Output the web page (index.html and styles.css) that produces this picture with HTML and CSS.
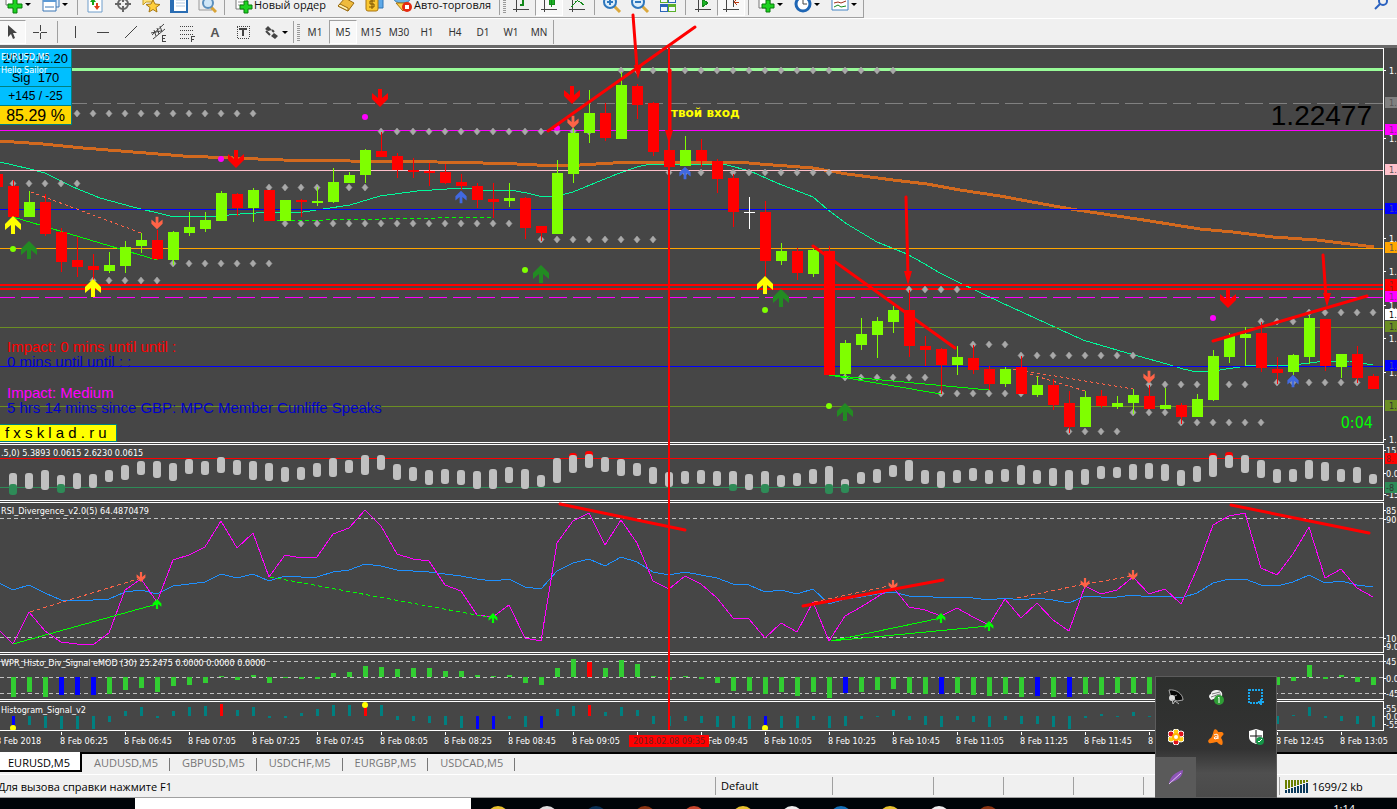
FILE: index.html
```html
<!DOCTYPE html>
<html lang="ru">
<head>
    <meta charset="UTF-8">
    <meta name="viewport" content="width=device-width, initial-scale=1.0">
    <title>EURUSD,M5</title>
    <link rel="stylesheet" href="styles.css">
</head>
<body>
    <div class="terminal">
        <div class="toolbar toolbar-main">
            <div class="group">
            <button class="tool tool-menu" aria-label="New chart">
                <svg class="icon" viewBox="0 0 20 20"><path d="M2 2h9v9H2z" fill="#fff" stroke="#777"/><path d="M9 5h4v5h5v4h-5v5H9v-5H4v-4h5z" fill="#1ed321" stroke="#087a0c"/></svg>
                <span class="caret"></span>
            </button>
            <button class="tool tool-menu" aria-label="Profiles">
                <svg class="icon" viewBox="0 0 20 20"><path d="M5 2h13v11H5z" fill="#e3eefa" stroke="#3b77b5"/><path d="M2 6h13v11H2z" fill="#fff" stroke="#3b77b5"/><path d="M2 7h13" stroke="#5c9ad6" stroke-width="2"/><path d="M4 13h9" stroke="#3b77b5"/></svg>
                <span class="caret"></span>
            </button>
            <span class="sep"></span>
            <button class="tool" aria-label="Market watch"><svg class="icon" viewBox="0 0 20 20"><path d="M3 1h14v17H3z" fill="#fff" stroke="#6f9dcb"/><path d="M8 4l3 4H9v3H7V8H5z" fill="#16a51c"/><path d="M12 16l-3-4h2V9h2v3h2z" fill="#e0401b"/></svg></button>
            <button class="tool" aria-label="Navigator"><svg class="icon" viewBox="0 0 20 20" fill="none" stroke="#666" stroke-width="2"><circle cx="10" cy="10" r="5"/><path d="M10 2v6M10 12v6M2 10h6M12 10h6"/></svg></button>
            <button class="tool" aria-label="Favorites"><svg class="icon" viewBox="0 0 20 20"><path d="M2 2h10v6H5l-3 3z" fill="#fde17a" stroke="#c89f23"/><path d="M12 6l2 4 5 .5-4 3 1 4.500-4-2.500-4 2.500 1-4.500-4-3 5-.5z" fill="#ffcf3c" stroke="#a87913"/></svg></button>
            <button class="tool" aria-label="Data window"><svg class="icon" viewBox="0 0 20 20"><path d="M2 1h16v17H2z" fill="#fff" stroke="#2a6db3" stroke-width="2"/><path d="M4 2v15" stroke="#2a6db3" stroke-width="2"/><path d="M7 6h9M7 9h9M7 12h9" stroke="#b5cbe2"/></svg></button>
            <button class="tool" aria-label="Strategy tester"><svg class="icon" viewBox="0 0 20 20"><path d="M2 1h13v15H2z" fill="#eee" stroke="#999"/><path d="M14 13l5 5" stroke="#d9a437" stroke-width="3"/><circle cx="11" cy="9" r="5" fill="#cfe6f7" stroke="#5b8fbd" stroke-width="2"/></svg></button>
            <span class="sep"></span>
            <button class="tool tool-text">
                <svg class="icon" viewBox="0 0 20 20"><path d="M3 1h11v14H3z" fill="#fff" stroke="#777"/><path d="M5 5h7M5 8h7M5 11h5" stroke="#999"/><path d="M11 7h4v4h4v4h-4v4h-4v-4H7v-4h4z" fill="#1ed321" stroke="#087a0c"/></svg>
                Новый ордер
            </button>
            <button class="tool" aria-label="MetaEditor"><svg class="icon" viewBox="0 0 20 20"><path d="M2 12l7-8 9 5-6 8z" fill="#efbb3d" stroke="#9a6a0e"/><path d="M2 12l10 5v-3L4 10z" fill="#fff2b3" stroke="#9a6a0e"/></svg></button>
            <button class="tool" aria-label="Market"><svg class="icon" viewBox="0 0 20 20"><path d="M9 2h10v12H9z" fill="#5ea9e8" stroke="#2f75b5"/><rect x="2" y="4" width="12" height="13" rx="2" fill="#fbc832" stroke="#a87511"/><path d="M11 7H6v3h4v3H5M8 5v10" fill="none" stroke="#7a5200"/></svg></button>
            <button class="tool tool-text">
                <svg class="icon" viewBox="0 0 20 20"><ellipse cx="9" cy="5" rx="8" ry="4" fill="#70b4e5" stroke="#347cae"/><path d="M3 9h11l-4 8z" fill="#fbcf48" stroke="#a87511"/><circle cx="14" cy="13" r="5" fill="#e52b12"/><path d="M12 11h4v4h-4z" fill="#fff"/></svg>
                Авто-торговля
            </button>
            <span class="grip"></span>
            <button class="tool" aria-label="Bar chart"><svg class="icon line" viewBox="0 0 20 20"><path d="M5 2v16M2 15h16"/><path d="M12 4v8M12 5h3M9 11h3" stroke="#14891b" stroke-width="2"/></svg></button>
            <button class="tool active" aria-label="Candlesticks"><svg class="icon line" viewBox="0 0 20 20"><path d="M5 2v16M2 15h16"/><path d="M10 4h5v6h-5zM12 2v11" fill="#1bb325" stroke="#14891b"/></svg></button>
            <button class="tool" aria-label="Line chart"><svg class="icon line" viewBox="0 0 20 20"><path d="M5 2v16M2 15h16"/><path d="M4 13c3-1 4-7 7-6 3 0 3 3 6 4" stroke="#14891b"/></svg></button>
            <span class="sep"></span>
            <button class="tool" aria-label="Zoom in"><svg class="icon" viewBox="0 0 20 20"><path d="M12 12l6 6" stroke="#dba83d" stroke-width="3"/><circle cx="8" cy="8" r="6" fill="#dceefb" stroke="#2e77bd" stroke-width="2"/><path d="M5 8h6M8 5v6" stroke="#2e77bd" stroke-width="2"/></svg></button>
            <button class="tool" aria-label="Zoom out"><svg class="icon" viewBox="0 0 20 20"><path d="M12 12l6 6" stroke="#dba83d" stroke-width="3"/><circle cx="8" cy="8" r="6" fill="#dceefb" stroke="#2e77bd" stroke-width="2"/><path d="M5 8h6" stroke="#2e77bd" stroke-width="2"/></svg></button>
            <button class="tool" aria-label="Tile windows"><svg class="icon" viewBox="0 0 20 20"><path d="M2 1h8v8H2zM10 10h8v8h-8z" fill="#5bb02a"/><path d="M10 1h8v8h-8zM2 10h8v8H2z" fill="#2c66b8"/><path d="M3 4h6v4H3zM11 4h6v4h-6zM3 13h6v4H3zM11 13h6v4h-6z" fill="#f3f7ff"/></svg></button>
            <span class="sep"></span>
            <button class="tool" aria-label="Auto scroll"><svg class="icon line" viewBox="0 0 20 20"><path d="M5 2v16M2 15h16"/><path d="M9 5l6 4-6 4z" fill="#1bb325" stroke="#14891b"/></svg></button>
            <button class="tool active" aria-label="Chart shift"><svg class="icon line" viewBox="0 0 20 20"><path d="M5 2v16M2 15h16M12 2v11"/><path d="M18 8h-5M16 5l-3 3 3 3" stroke="#b93a12"/></svg></button>
            <span class="sep"></span>
            <button class="tool tool-menu" aria-label="Indicators">
                <svg class="icon" viewBox="0 0 20 20"><path d="M3 1h11v13H3z" fill="#fff" stroke="#777"/><path d="M10 6h4v4h4v4h-4v4h-4v-4H6v-4h4z" fill="#1ed321" stroke="#087a0c"/></svg>
                <span class="caret"></span>
            </button>
            <button class="tool tool-menu" aria-label="Periods">
                <svg class="icon" viewBox="0 0 20 20"><circle cx="10" cy="10" r="7" fill="#fff" stroke="#1f66b4" stroke-width="3"/><path d="M10 5v5h4" fill="none" stroke="#444"/></svg>
                <span class="caret"></span>
            </button>
            <button class="tool tool-menu" aria-label="Templates">
                <svg class="icon" viewBox="0 0 20 20"><path d="M2 3h16v13H2z" fill="#fff" stroke="#4384c4"/><path d="M2 4h16" stroke="#4384c4" stroke-width="2"/><path d="M4 9l4-1 3 1 5-2" fill="none" stroke="#a02f1a"/><path d="M4 13l4-2 3 2 5-1" fill="none" stroke="#14891b"/></svg>
                <span class="caret"></span>
            </button>
            </div>
            <button class="tool search" aria-label="Search"><svg class="icon" viewBox="0 0 20 20" fill="none" stroke="#2b62c0" stroke-width="2"><circle cx="12" cy="8" r="4"/><path d="M9 11l-5 5"/></svg></button>
        </div>

        <div class="toolbar toolbar-draw">
            <div class="group">
            <button class="tool active" aria-label="Cursor"><svg class="icon" viewBox="0 0 20 20"><path d="M6 3v12l3-3 2 5 2-1-2-5h4z" fill="#444"/></svg></button>
            <button class="tool" aria-label="Crosshair"><svg class="icon line" viewBox="0 0 20 20"><path d="M10 3v6M10 11v6M3 10h6M11 10h6"/></svg></button>
            <span class="sep"></span>
            <button class="tool" aria-label="Vertical line"><svg class="icon line" viewBox="0 0 20 20"><path d="M10 4v12"/></svg></button>
            <button class="tool" aria-label="Horizontal line"><svg class="icon line" viewBox="0 0 20 20"><path d="M4 10h12"/></svg></button>
            <button class="tool" aria-label="Trend line"><svg class="icon slant" viewBox="0 0 20 20"><path d="M4 16L16 4"/></svg></button>
            <button class="tool" aria-label="Channel"><svg class="icon slant" viewBox="0 0 20 20"><path d="M3 13L15 2M4 17L16 7M5 8l2 6M8 6l2 6M11 4l2 6M2 11l10-2"/><path d="M17 13h-4v6h4M13 16h3" class="crisp"/></svg></button>
            <button class="tool" aria-label="Fibonacci"><svg class="icon line" viewBox="0 0 20 20"><path d="M3 4h14M3 8h14M3 12h14M3 16h9" stroke-dasharray="1 1"/><path d="M18 14h-4v6M14 17h3"/></svg></button>
            <button class="tool letter" aria-label="Text">A</button>
            <button class="tool" aria-label="Text label"><svg class="icon line" viewBox="0 0 20 20"><path d="M4 4h12v12H4z" stroke-dasharray="1 1"/><path d="M6 7h8M10 7v7" stroke-width="2"/></svg></button>
            <button class="tool tool-menu" aria-label="Arrows">
                <svg class="icon" viewBox="0 0 20 20"><path d="M7 4l4 4-4 1-3-2zM13 11l4 3-3 3-4-3z" fill="#444"/><path d="M5 9l4 4M11 8l2 2" stroke="#444" stroke-width="2"/></svg>
                <span class="caret"></span>
            </button>
            <span class="grip"></span>
            <button class="tool period">M1</button>
            <button class="tool period active">M5</button>
            <button class="tool period">M15</button>
            <button class="tool period">M30</button>
            <button class="tool period">H1</button>
            <button class="tool period">H4</button>
            <button class="tool period">D1</button>
            <button class="tool period">W1</button>
            <button class="tool period">MN</button>
            </div>
        </div>

        <div class="chart">
            <section class="pane pane-price">
                <svg class="plot" id="price"></svg>
                <svg class="scale" id="price-scale"></svg>
                <div class="info">
                    <div class="info-date">2017.12.20</div>
                    <div class="info-date">Sig&nbsp; 170</div>
                    <div class="info-small">+145 / -25</div>
                    <div class="info-gold">85.29 %</div>
                </div>
                <div class="chart-title">EURUSD,M5<br>Hello Sailor</div>
                <div class="news">
                    <div class="news-item">
                        <p class="impact-high">Impact: 0 mins until until :</p>
                        <p class="news-text">0 mins until until : :</p>
                    </div>
                    <div class="news-item">
                        <p class="impact-medium">Impact: Medium</p>
                        <p class="news-text">5 hrs 14 mins since GBP: MPC Member Cunliffe Speaks</p>
                    </div>
                </div>
                <div class="site">f x s k l a d . r u</div>
                <div class="quote">1.22477</div>
                <div class="timer">0:04</div>
            </section>
            <section class="pane pane-cci">
                <svg class="plot" id="cci"></svg>
                <svg class="scale" id="cci-scale"></svg>
                <div class="pane-title">.5,0) 5.3893 0.0615 2.6230 0.0615</div>
            </section>
            <section class="pane pane-rsi">
                <svg class="plot" id="rsi"></svg>
                <svg class="scale" id="rsi-scale"></svg>
                <div class="pane-title">RSI_Divergence_v2.0(5) 64.4870479</div>
            </section>
            <section class="pane pane-wpr">
                <svg class="plot" id="wpr"></svg>
                <svg class="scale" id="wpr-scale"></svg>
                <div class="pane-title">WPR_Histo_Div_Signal eMOD (30) 25.2475 0.0000 0.0000 0.0000</div>
            </section>
            <section class="pane pane-hist">
                <svg class="plot" id="hist"></svg>
                <svg class="scale" id="hist-scale"></svg>
                <div class="pane-title">Histogram_Signal_v2</div>
            </section>
            <div class="time-axis" id="time-axis">
                <div class="time-mark">2018.02.08 09:35</div>
            </div>
        </div>

        <nav class="tabs">
            <a class="tab current" href="#">EURUSD,M5</a>
            <a class="tab" href="#">AUDUSD,M5</a>
            <a class="tab" href="#">GBPUSD,M5</a>
            <a class="tab" href="#">USDCHF,M5</a>
            <a class="tab" href="#">EURGBP,M5</a>
            <a class="tab" href="#">USDCAD,M5</a>
        </nav>

        <footer class="status">
            <span class="status-help">Для вызова справки нажмите F1</span>
            <span class="cell cell-profile">Default</span>
            <span class="cell cell-date"></span>
            <span class="cell"></span>
            <span class="cell"></span>
            <span class="cell"></span>
            <span class="cell cell-volume"></span>
            <span class="cell cell-net">
                <svg class="net" viewBox="0 0 23 13" id="net"></svg>
                1699/2 kb
            </span>
        </footer>

        <div class="taskbar">
            <input class="taskbar-search" type="text" aria-label="Search">
            <div class="taskbar-apps">
                <i class="app yellow"></i><i class="app ring"></i><i class="app navy"></i><i class="app brown"></i><i class="app red"></i><i class="app yellow"></i><i class="app white"></i><i class="app blue"></i><i class="app yellow"></i><i class="app white"></i><i class="app brown"></i>
            </div>
            <span class="clock">1:14</span>
        </div>

        <svg class="markup" id="markup"></svg>
        <div class="entry-note">твой вход</div>

        <div class="tray">
            <button class="tray-item" aria-label="Sound"><svg viewBox="0 0 16 16"><path d="M1 1C8 0 15 5 15 11L9 12 3 9z" fill="#080808" stroke="#aaa"/><path d="M4 8l5-2" stroke="#888"/><circle cx="4" cy="9" r="3" fill="#ddd"/><path d="M4 10l1 5 2-3 4 3" fill="none" stroke="#bbb"/></svg></button>
            <button class="tray-item" aria-label="Updates"><svg viewBox="0 0 16 16"><path d="M1 8c0-2 1-3 2-3 0-3 3-4 6-4 4 0 6 3 5 6L3 11z" fill="#f3f3f3"/><path d="M3 8c4-1 7-3 10-3M4 5l8-2" fill="none" stroke="#777"/><circle cx="11" cy="11" r="5" fill="#2e9d35"/><path d="M10 9l1-1v6" fill="none" stroke="#fff"/></svg></button>
            <button class="tray-item" aria-label="Screenshot"><svg viewBox="0 0 16 16"><path d="M1 1h13v13H1z" fill="none" stroke="#19a7ee" stroke-width="2" stroke-dasharray="2 1"/><path d="M13 10v6M10 13h6" stroke="#19a7ee" stroke-width="2"/></svg></button>
            <button class="tray-item" aria-label="Flower"><svg viewBox="0 0 16 16"><g fill="#ffcf14" stroke="#fff"><circle cx="8" cy="3" r="3"/><circle cx="3" cy="10" r="3"/><circle cx="13" cy="10" r="3"/></g><g fill="#e3141d" stroke="#fff"><circle cx="3" cy="5" r="3"/><circle cx="13" cy="5" r="3"/><circle cx="8" cy="13" r="3"/></g><circle cx="8" cy="8" r="4" fill="#ffb400"/><circle cx="8" cy="8" r="2" fill="#fff"/></svg></button>
            <button class="tray-item" aria-label="Antivirus"><svg viewBox="0 0 16 16"><path d="M6 1c1-2 4 0 4 2l4 0c2 1 2 3 0 4l-1 2c2 2 2 6 1 7-2 0-4-2-5-3-3 0-6 2-8 1-2-2 0-4 2-5C5 6 5 3 6 1z" fill="#ff7e0d"/><path d="M6 6q4-2 4 1v3M10 8q-4-1-4 1t4 0" fill="none" stroke="#fff"/></svg></button>
            <button class="tray-item" aria-label="Security"><svg viewBox="0 0 16 16"><path d="M1 2l7-2 7 2v6c0 4-4 6-7 7-3-1-7-3-7-7z" fill="#fff"/><path d="M8 1v13M2 7h12" stroke="#111"/><circle cx="12" cy="12" r="4" fill="#159447"/><path d="M10 12l1 1 3-3" fill="none" stroke="#fff"/></svg></button>
            <button class="tray-item hover" aria-label="Notes"><svg viewBox="0 0 16 16"><path d="M1 15C2 7 8 3 15 1c0 6-5 11-12 12z" fill="#8e55b8"/><path d="M1 15L13 4" stroke="#e3c6f5"/></svg></button>
        </div>
    </div>

    <script src="chart.js"></script>
</body>
</html>
```

FILE: styles.css
```css
:root {
    --chart-bg: #464646;
    --face: #f0f0f0;
    --edge: #a0a0a0;
    --ui-font: "Open Sans", "Noto Sans", sans-serif;
    --chart-font: "DejaVu Sans Condensed", "DejaVu Sans", sans-serif;
    --label-font: "Liberation Sans", Arial, sans-serif;
}

* {
    box-sizing: border-box;
}

body {
    margin: 0;
    height: 100vh;
    overflow: hidden;
    background: #000408;
    font-family: var(--ui-font);
    font-size: 11px;
    color: #000;
}

.terminal {
    position: relative;
    height: 100vh;
    overflow: hidden;
}

/* Toolbars */

.toolbar {
    display: flex;
    align-items: center;
    background: var(--face);
}

.group {
    display: flex;
    align-items: center;
    border-right: 1px solid var(--edge);
}

.toolbar-main {
    height: 18px;
    overflow: hidden;
    align-items: flex-end;
}

.toolbar-main .group {
    height: 26px;
    padding-bottom: 1px;
    border-bottom: 1px solid var(--edge);
}

.toolbar-draw {
    height: 30px;
    border-top: 1px solid #fff;
    border-bottom: 3px solid #696969;
}

.toolbar-draw .group {
    margin-left: -2px;
}

.tool {
    flex: none;
    display: flex;
    align-items: center;
    justify-content: center;
    width: 28px;
    height: 24px;
    padding: 0;
    border: 1px solid transparent;
    background: none;
    font: inherit;
    color: #111;
}

.tool.active {
    border-color: var(--edge) #fff #fff var(--edge);
    background: #f8f8f8;
}

.tool-menu {
    width: 37px;
    justify-content: flex-start;
    padding-left: 3px;
    gap: 1px;
}

.toolbar-draw .tool-menu {
    width: 34px;
}

.tool-text {
    width: auto;
    justify-content: flex-start;
    gap: 1px;
    padding: 0 5px 0 4px;
}

.search {
    margin: 0 2px 3px auto;
}

.icon {
    flex: none;
    width: 20px;
    height: 20px;
}

.line,
.slant {
    fill: none;
    stroke: #444;
}

.line {
    shape-rendering: crispEdges;
}

.letter {
    font: bold 13px var(--label-font);
    color: #555;
}

.caret {
    border: 3px solid transparent;
    border-top-color: #000;
    border-bottom: 0;
}

.sep {
    flex: none;
    width: 1px;
    height: 22px;
    margin: 0 3px;
    background: var(--edge);
}

.grip {
    flex: none;
    width: 8px;
    height: 22px;
    margin-left: 2px;
    border-left: 1px solid var(--edge);
    background: repeating-linear-gradient(#999 0 1px, #f0f0f0 1px 2px) 3px 3px / 3px 17px no-repeat;
}

.period {
    font: 10px "Noto Sans", sans-serif;
    color: #333;
}

/* Chart window */

.chart {
    display: grid;
    row-gap: 1px;
    background: var(--chart-bg);
    font: 9px/12px var(--chart-font);
    color: #fff;
}

.pane {
    position: relative;
    display: flex;
    overflow: hidden;
}

.pane-price {
    height: 395px;
}

.pane-cci {
    height: 57px;
}

.pane-rsi {
    height: 151px;
}

.pane-wpr {
    height: 46px;
}

.pane-hist {
    height: 30px;
}

.plot {
    flex: 1;
    min-width: 0;
    height: 100%;
    border: 1px solid #fff;
    border-left: 0;
}

.scale {
    flex: none;
    width: 13px;
    height: 100%;
    font: 9px var(--chart-font);
}

.crisp {
    shape-rendering: crispEdges;
}

.smooth {
    shape-rendering: geometricPrecision;
}

.pane-title,
.chart-title {
    position: absolute;
    left: 1px;
    top: 3px;
    white-space: nowrap;
}

.chart-title {
    line-height: 13px;
}

.info {
    position: absolute;
    top: 1px;
    left: 0;
    width: 72px;
    font-family: var(--label-font);
    color: #000;
    text-align: center;
    border-right: 1px solid #008080;
}

.info div {
    height: 19px;
    line-height: 19px;
    border-bottom: 1px solid #008080;
    background: #00bfff;
}

.info .info-date {
    font-size: 13px;
}

.info .info-small {
    font-size: 12px;
}

.info .info-gold {
    font-size: 16px;
    background: #ffd700;
}

.news {
    position: absolute;
    left: 7px;
    bottom: 28px;
    display: grid;
    gap: 16px;
    font: 15px/15px var(--label-font);
}

.news p {
    margin: 0;
}

.impact-high {
    color: #f00;
}

.impact-medium {
    color: #f0f;
}

.news-text {
    color: #0000cd;
}

.site {
    position: absolute;
    left: 0;
    bottom: 1px;
    width: 117px;
    padding-left: 5px;
    border: 1px solid #008080;
    border-left: 0;
    background: #ff0;
    font: 15px/16px var(--label-font);
    color: #000;
}

.quote {
    position: absolute;
    right: 25px;
    top: 52px;
    font: 28px/32px var(--label-font);
    color: #000;
}

.timer {
    position: absolute;
    right: 24px;
    bottom: 9px;
    font: 16px/22px var(--chart-font);
    color: #0f0;
}

.entry-note {
    position: absolute;
    left: 671px;
    top: 106px;
    font: bold 12px/15px "DejaVu Sans", sans-serif;
    color: #ff0;
}

.markup {
    position: absolute;
    inset: 0;
    width: 100%;
    height: 100%;
    pointer-events: none;
}

.time-axis {
    position: relative;
    display: flex;
    height: 20px;
    margin-left: -4px;
    overflow: hidden;
}

.time-label {
    flex: none;
    width: 64px;
    padding-top: 3px;
    white-space: nowrap;
    background: linear-gradient(#fff, #fff) 1px 0 / 1px 3px no-repeat;
}

.time-mark {
    position: absolute;
    left: 633px;
    top: 3px;
    width: 80px;
    height: 12px;
    overflow: hidden;
    background: #f00;
    color: #6b2222;
    text-align: center;
    white-space: nowrap;
}

/* Tabs and status bar */

.tabs {
    display: flex;
    height: 23px;
    padding-bottom: 2px;
    background: var(--face);
    border-top: 2px solid #000;
    border-bottom: 1px solid #fff;
}

.tab {
    position: relative;
    padding: 0 12px;
    line-height: 18px;
    color: #777;
    text-decoration: none;
}

.tab:not(.current)::after {
    content: "";
    position: absolute;
    right: 0;
    top: 4px;
    width: 1px;
    height: 13px;
    background: #777;
}

.tab.current {
    margin-top: -2px;
    padding: 2px 10px 0 8px;
    background: #fff;
    color: #000;
    border-right: 2px solid #000;
    border-bottom: 2px solid #000;
}

.status {
    display: flex;
    align-items: center;
    height: 23px;
    background: var(--face);
    border-bottom: 1px solid var(--edge);
    white-space: nowrap;
}

.status-help {
    flex: 1;
    margin-left: -2px;
}

.cell {
    flex: none;
    width: 70px;
    height: 18px;
    padding-left: 5px;
    border-left: 1px solid var(--edge);
    line-height: 17px;
}

.cell-profile {
    width: 117px;
}

.cell-date {
    width: 101px;
}

.cell-volume {
    width: 136px;
}

.cell-net {
    display: flex;
    align-items: center;
    gap: 4px;
    width: 118px;
}

.net {
    width: 23px;
    height: 13px;
    shape-rendering: crispEdges;
}

/* Windows taskbar */

.taskbar {
    display: flex;
    height: 40px;
    background: #000408;
    color: #fff;
}

.taskbar-search {
    width: 336px;
    margin-left: 135px;
    border: 0;
    background: #fff;
}

.taskbar-apps {
    display: flex;
    gap: 27px;
    margin: 8px 0 0 16px;
}

.app {
    width: 22px;
    height: 22px;
    border-radius: 50%;
}

.app.navy {
    background: #0a3055;
}

.app.yellow {
    background: #e8c12e;
}

.app.white {
    background: #eee;
}

.app.ring {
    border: 3px solid #ddd;
}

.app.brown {
    background: #8a3412;
}

.app.red {
    background: #c8452c;
}

.app.blue {
    background: #1470b8;
}

.clock {
    margin: 3px 42px 0 auto;
}

.tray {
    position: absolute;
    right: 121px;
    bottom: 12px;
    display: grid;
    grid-template-columns: repeat(3, 40px);
    grid-auto-rows: 40px;
    outline: 1px solid #5c5c5c;
    background: linear-gradient(#2d2f2d, #333 60%, #4f4f4f 80%, #4a4a4a);
}

.tray-item {
    padding: 12px;
    border: 0;
    background: none;
}

.tray-item.hover {
    background: #5a5a5a;
}

.tray-item svg {
    display: block;
    width: 16px;
    height: 16px;
}
```

FILE: chart.js
```js
const NS = 'http://www.w3.org/2000/svg';
const STEP = 16;
const FIRST = 13;

// First drawable row of each pane; all y values below are window rows
const TOP = { price: 49, cci: 445, rsi: 503, wpr: 655, hist: 702 };

const barX = i => FIRST + i * STEP;

function add(parent, name, attrs, text) {
    const el = document.createElementNS(NS, name);
    for (const key in attrs) el.setAttribute(key, attrs[key]);
    if (text !== undefined) el.textContent = text;
    parent.appendChild(el);
    return el;
}

function layer(id, top) {
    return add(document.getElementById(id), 'g', { transform: `translate(0 ${-top})`, class: 'crisp' });
}

function rect(g, x, y, w, h, fill) {
    add(g, 'rect', { x: x, y: y, width: w, height: h, fill: fill });
}

function capsule(g, x, y, w, h, fill) {
    add(g, 'rect', { x: x, y: y, width: w, height: h, rx: 3, fill: fill, class: 'smooth' });
}

function level(g, y, color, height, dash) {
    if (dash) {
        add(g, 'line', { x1: dash[0] > 10 ? -3 : 0, x2: '100%', y1: y + 0.5, y2: y + 0.5, stroke: color, 'stroke-dasharray': dash.join(' ') });
    } else {
        add(g, 'rect', { x: 0, y: y, width: '100%', height: height || 1, fill: color });
    }
}

function curve(g, points, color, width, dash) {
    add(g, 'polyline', {
        points: points.map(p => p.join(',')).join(' '),
        fill: 'none', stroke: color, 'stroke-width': width || 1, 'stroke-dasharray': dash || 'none'
    });
}

function dot(g, x, y, color) {
    add(g, 'circle', { cx: x, cy: y, r: 3, fill: color, class: 'smooth' });
}

function arrow(g, x, y, color, dir, scale) {
    add(g, 'path', {
        d: 'M0-9L8-1V5L2 0V9H-2V0L-8 5V-1Z', fill: color, class: 'smooth',
        transform: `translate(${x} ${y}) rotate(${dir === 'down' ? 180 : 0}) scale(${scale || 1})`
    });
}

// ---- Price ----

// high, body top, body bottom, low, direction
const candles = [
    [174,174,187,187,'d'],
    [180,186,217,217,'d'],[191,202,217,217,'u'],[194,202,234,236,'d'],[228,232,262,272,'d'],[237,260,267,277,'d'],
    [254,266,270,281,'d'],[252,265,271,273,'u'],[241,247,266,273,'u'],[233,240,246,253,'u'],[230,240,259,260,'d'],
    [231,232,260,265,'u'],[212,227,233,236,'u'],[212,220,229,232,'u'],[191,193,221,221,'u'],[193,194,208,216,'d'],
    [188,190,208,222,'u'],[190,190,221,221,'d'],[200,200,221,221,'u'],[199,200,202,217,'d'],[187,201,203,206,'u'],
    [168,182,202,203,'u'],[172,175,183,183,'u'],[149,150,175,183,'u'],[132,151,157,157,'d'],[153,156,170,178,'d'],
    [158,170,172,178,'d'],[163,171,173,186,'d'],[164,172,183,184,'d'],[174,182,186,190,'d'],[183,186,200,208,'d'],
    [183,199,202,218,'d'],[183,198,201,207,'u'],[197,198,228,239,'d'],[226,226,233,241,'d'],[160,173,234,234,'u'],
    [128,133,174,183,'u'],[90,113,133,143,'u'],[103,113,138,141,'d'],[72,85,139,139,'u'],[84,86,105,119,'d'],
    [102,103,152,156,'d'],[150,150,167,167,'d'],[136,150,166,166,'u'],[139,150,161,167,'d'],[159,161,179,193,'d'],
    [174,178,212,227,'d'],[197,212,213,229,'n'],[201,212,261,278,'d'],[243,251,261,265,'u'],[248,251,273,280,'d'],
    [246,250,274,277,'u'],[246,251,375,375,'d'],[340,343,374,377,'u'],[318,334,345,350,'u'],[317,321,335,358,'u'],
    [306,310,322,333,'u'],[290,310,346,357,'d'],[336,346,350,366,'d'],[348,349,365,394,'d'],[346,357,365,375,'u'],
    [345,358,370,374,'d'],[366,369,384,390,'d'],[367,369,384,387,'u'],[356,367,394,394,'d'],[376,385,395,397,'u'],
    [379,385,405,410,'d'],[391,403,427,433,'d'],[391,397,427,427,'u'],[390,396,406,408,'d'],[396,403,407,409,'u'],
    [389,395,403,414,'u'],[385,396,409,409,'d'],[388,405,409,409,'u'],[403,405,417,424,'d'],[394,399,417,417,'u'],
    [350,356,400,401,'u'],[333,336,357,363,'u'],[327,334,338,366,'u'],[322,333,368,372,'d'],[357,369,373,384,'d'],
    [354,355,372,375,'u'],[315,318,357,364,'u'],[319,319,366,371,'d'],[354,354,367,378,'u'],[346,354,378,383,'d'],
    [374,376,389,389,'d']
];

// row, first bar, last bar
const fractals = [
    [183,0,4],[113,4,15],[187,16,22],[223,17,31],[263,10,16],[280,5,9],[131,23,36],[239,33,40],[70,38,55],
    [172,41,51],[289,56,59],[344,60,62],[355,63,70],[377,52,57],[393,58,63],[431,66,69],[412,70,72],
    [384,71,77],[422,73,78],[321,78,80],[382,79,84],[312,81,85]
];

const slowMa = [
    [0,141],[43,144],[83,148],[133,152],[183,156],[233,158],[283,160],[350,161],[437,162],[483,163],[517,164],
    [537,165],[580,165],[613,163],[633,162],[737,162],[760,164],[813,168],[847,174],[893,180],[927,184],[960,190],
    [1000,196],[1043,204],[1077,210],[1117,216],[1150,221],[1200,229],[1233,232],[1273,237],[1317,240],[1374,247]
];

const fastMa = [
    [0,162],[30,169],[45,173],[73,187],[100,198],[133,207],[170,216],[207,217],[240,214],[273,212],[303,212],
    [350,205],[380,196],[417,191],[463,188],[483,190],[510,190],[527,193],[543,197],[557,196],[573,192],[590,185],
    [617,174],[637,167],[650,164],[723,164],[750,171],[777,183],[813,197],[827,209],[847,224],[877,242],[907,254],
    [923,263],[940,273],[960,283],[1000,302],[1083,340],[1127,353],[1167,364],[1183,369],[1197,372],[1213,371],
    [1233,368],[1253,365],[1293,365],[1317,362],[1350,361],[1373,365]
];

function drawPrice() {
    const g = layer('price', TOP.price);
    curve(g, slowMa, '#d2691e', 3);
    curve(g, fastMa, '#00fa9a');
    level(g, 68, '#98fb98', 3);
    level(g, 103, '#808080', 1, [18, 6]);
    level(g, 130, '#f0f');
    level(g, 170, '#ffc0cb');
    level(g, 209, '#00f');
    level(g, 248, '#ffa500');
    level(g, 284, '#f00', 2);
    level(g, 288, '#f00', 2);
    level(g, 297, '#f0f', 1, [18, 6]);
    level(g, 327, '#6b8e23');
    level(g, 366, '#00f');
    level(g, 406, '#6b8e23');

    fractals.forEach(([y, from, to]) => {
        for (let i = from; i <= to; i++) {
            add(g, 'path', { d: `M${barX(i)} ${y - 3}l3 3.500l-3 3.500l-3-3.500z`, fill: '#a9a9a9', stroke: '#a9a9a9', 'stroke-width': 0.5, class: 'smooth' });
        }
    });

    curve(g, [[13,217],[157,260]], '#0f0');
    curve(g, [[829,375],[941,394]], '#0f0');
    curve(g, [[829,375],[989,390]], '#0f0');
    curve(g, [[270,221],[493,217]], '#0f0', 1, '4 3');
    curve(g, [[31,192],[141,233]], '#ff6347', 1, '3 3');
    curve(g, [[1013,369],[1133,389]], '#ff6347', 1, '3 3');
    curve(g, [[1013,369],[1085,391]], '#ff6347', 1, '3 3');

    const colors = { u: '#7fff00', d: '#f00', n: '#fff' };
    candles.forEach(([high, top, bottom, low, dir], n) => {
        const x = barX(n - 1);
        rect(g, x, high, 1, low - high, colors[dir]);
        rect(g, x - 5, top, 11, bottom - top, colors[dir]);
    });

    [[380,98],[236,159],[572,95],[1228,299]].forEach(p => arrow(g, p[0], p[1], '#f00', 'down'));
    [[573,122],[157,223],[1149,377]].forEach(p => arrow(g, p[0], p[1], '#ff6347', 'down', 0.7));
    [[13,225],[93,288],[765,285]].forEach(p => arrow(g, p[0], p[1], '#ff0', 'up'));
    [[29,250],[541,274],[781,298],[845,412]].forEach(p => arrow(g, p[0], p[1], '#228b22', 'up'));
    [[461,197],[685,173],[1293,381]].forEach(p => arrow(g, p[0], p[1], '#4169e1', 'up', 0.7));
    [[13,249],[525,270],[765,310],[829,406]].forEach(p => dot(g, p[0], p[1], '#7fff00'));
    [[221,159],[365,117],[557,128],[1213,318]].forEach(p => dot(g, p[0], p[1], '#f0f'));
}

// ---- Indicators ----

const cci = [
    [473,490],[473,489],[470,490],[475,490],[473,489],[474,488],[470,482],[465,480],[461,475],[461,478],[463,481],
    [459,474],[461,475],[457,473],[460,475],[461,480],[463,481],[467,482],[467,480],[463,477],[458,477],[460,473],
    [455,475],[455,470],[464,480],[467,481],[470,485],[469,484],[470,485],[471,489],[469,489],[467,483],[469,489],
    [475,487],[458,483],[455,473],[454,468],[457,472],[459,476],[463,476],[467,484],[472,487],[471,484],[470,484],
    [471,486],[471,487],[474,490],[471,488],[475,487],[473,486],[469,484],[466,489],[479,489],[472,484],[469,483],
    [465,477],[460,481],[470,484],[471,488],[470,483],[468,481],[470,484],[469,482],[465,485],[470,484],[468,486],
    [470,490],[469,485],[466,479],[467,478],[464,480],[463,479],[464,481],[470,486],[466,482],[455,477],[455,468],
    [455,473],[460,478],[469,483],[469,482],[460,479],[462,481],[469,482],[467,483],[474,484]
];
const oversold = { 0: 495, 3: 493, 45: 491, 47: 493, 51: 494, 52: 493 };
const overbought = { 35: 453, 36: 451, 75: 453, 76: 452 };

const rsi = [
    628,644,612,631,642,644,645,633,590,579,602,560,555,547,521,548,533,577,555,558,557,534,528,510,526,554,559,561,
    585,591,615,617,605,638,641,543,521,513,545,520,543,581,589,576,584,598,618,619,638,623,632,602,641,616,607,597,
    587,607,610,616,608,617,625,599,618,603,620,631,586,594,590,577,594,589,604,569,525,516,513,568,575,554,527,578,
    569,588,597
];

const rsiSlow = [
    582,590,585,593,600,600,600,599,592,590,594,586,584,582,574,578,574,581,576,577,577,572,570,564,566,570,571,572,
    574,576,579,581,579,587,589,571,563,559,566,557,562,572,575,572,575,578,584,585,592,590,594,589,604,599,597,594,
    592,596,596,598,597,598,600,598,600,598,600,603,596,597,597,595,597,596,598,593,583,579,579,585,586,582,575,583,
    581,585,587
];

const wpr = [
    -20,-15,-20,-18,-18,-18,-17,-13,-11,-15,-9,-8,-6,1,-3,2,-6,-1,-2,-2,4,5,11,10,8,9,9,6,6,2,1,2,-6,-8,9,18,15,9,
    17,13,1,-3,1,-2,-6,-14,-14,-17,-15,-19,-15,-21,-16,-15,-13,-12,-16,-17,-17,-16,-18,-19,-17,-20,-19,-20,-20,-17,
    -18,-16,-16,-17,-15,-14,-12,-6,-3,1,-4,-8,-4,12,-2,2,-5,-8
];

const hist = [
    -9,-9,-12,-13,-13,-13,-6,5,9,-2,5,9,10,12,6,9,-2,-2,3,7,11,11,9,11,-4,-5,-7,-9,-12,-13,-13,-3,-11,-12,7,10,11,
    4,9,6,-8,-10,-5,-7,-11,-12,-13,-9,-12,-12,-4,-12,-10,-3,-1,6,-4,-9,-11,-4,-6,-11,-4,-8,-8,-11,-13,-2,2,-1,4,-1,
    -3,-5,-4,3,6,4,-4,-8,1,9,-2,-5,-8,-11
];

function drawCci() {
    const g = layer('cci', TOP.cci);
    level(g, 458, '#f00');
    level(g, 487, '#2e8b57');
    cci.forEach(([top, bottom], i) => {
        const x = barX(i) - 4;
        if (overbought[i]) capsule(g, x, overbought[i], 8, 8, '#f00');
        capsule(g, x, top, 8, bottom - top, '#c0c0c0');
        if (oversold[i]) capsule(g, x, 484, 8, oversold[i] - 484, '#2e8b57');
    });
}

function drawRsi() {
    const g = layer('rsi', TOP.rsi);
    level(g, 518, '#c0c0c0', 1, [4, 3]);
    level(g, 637, '#c0c0c0', 1, [4, 3]);
    curve(g, rsiSlow.map((y, n) => [barX(n - 1), y]), '#1e90ff');
    curve(g, rsi.map((y, n) => [barX(n - 1), y]), '#f0f');
    curve(g, [[13,644],[157,604]], '#0f0');
    curve(g, [[831,641],[941,618]], '#0f0');
    curve(g, [[831,641],[989,626]], '#0f0');
    curve(g, [[270,577],[493,618]], '#0f0', 1, '4 3');
    curve(g, [[30,612],[141,578]], '#ff6347', 1, '4 3');
    curve(g, [[814,602],[893,585]], '#ff6347', 1, '4 3');
    curve(g, [[1017,598],[1085,584],[1133,576]], '#ff6347', 1, '4 3');
    [[141,577],[893,585],[1085,583],[1133,575]].forEach(p => arrow(g, p[0], p[1], '#ff6347', 'down', 0.55));
    [[157,604],[493,618],[941,618],[989,626]].forEach(p => arrow(g, p[0], p[1], '#0f0', 'up', 0.55));
}

function drawBars(g, values, base, width, color, special) {
    values.forEach((v, i) => {
        rect(g, barX(i) - (width - 1) / 2, v > 0 ? base - v : base, width, Math.abs(v), special[i] || color);
    });
}

function drawHistograms() {
    const blue = '#00f';
    const w = layer('wpr', TOP.wpr);
    [661, 677, 693].forEach(y => level(w, y, '#c0c0c0', 1, [4, 3]));
    drawBars(w, wpr, 677, 5, '#32cd32', { 3: blue, 4: blue, 5: blue, 36: '#f00', 52: blue, 58: blue, 64: blue, 66: blue });

    const h = layer('hist', TOP.hist);
    drawBars(h, hist, 716, 3, '#008080', { 0: blue, 13: '#f00', 22: '#f00', 29: blue, 30: blue, 33: blue, 36: '#f00', 47: blue });
    dot(h, 13, 728, '#ff0');
    dot(h, 365, 705, '#ff0');
    dot(h, 765, 728, '#ff0');
}

// ---- Scales ----

// row, text, box colour, text colour
const scales = {
    'price-scale': [48, [
        [70,'1.'],[138,'1.'],[238,'1.'],[271,'1.'],[305,'1.'],[338,'1.'],[372,'1.'],[439,'1.'],
        [102,'1.','#808080','#555'],[129,'1.','#f0f','#803080'],[169,'1.','#ffc0cb','#555'],[208,'1.','#00f','#4646a0'],
        [247,'1.','#ffa500','#555'],[284,'1.','#f00','#802020'],[289,'1.','#f00','#802020'],[296,'1.','#f0f','#803080'],
        [314,'1.','#fff','#000'],[326,'1.','#6b8e23','#333'],[365,'1.','#00f','#4646a0'],[405,'1.','#6b8e23','#333']
    ]],
    'cci-scale': [444, [[450,'15'],[473,'0.0'],[494,'-15'],[458,'8.','#f00','#802020'],[487,'-8','#2e8b57','#333']]],
    'rsi-scale': [502, [[510,'85'],[519,'90'],[638,'10'],[646,'9.0']]],
    'wpr-scale': [654, [[661,'45'],[678,'0.0'],[693,'-45']]],
    'hist-scale': [701, [[708,'55'],[716,'0.0'],[724,'-55']]]
};

function drawScales() {
    for (const id in scales) {
        const [top, labels] = scales[id];
        const g = layer(id, top);
        labels.forEach(([y, text, box, color]) => {
            if (box) rect(g, 1, y - 5, 12, 11, box);
            else rect(g, 0, y, 2, 1, '#fff');
            add(g, 'text', { x: id === 'price-scale' ? 5 : 2, y: y + 4, fill: color || '#fff' }, text);
        });
    }
}

function drawTimeAxis() {
    const axis = document.getElementById('time-axis');
    const mark = axis.firstElementChild;
    for (let n = 0; n < 22; n++) {
        const label = document.createElement('div');
        const minutes = 6 * 60 + 5 + n * 20;
        const time = String(Math.floor(minutes / 60)).padStart(2, '0') + ':' + String(minutes % 60).padStart(2, '0');
        label.className = 'time-label';
        label.textContent = n === 0 ? '8 Feb 2018' : '8 Feb ' + time;
        axis.insertBefore(label, mark);
    }
}

// ---- Hand drawn markup ----

function drawMarkup() {
    const g = document.getElementById('markup');
    rect(g, 668, 48, 2, 682, '#f00');
    [
        [548,131,695,27],[813,246,955,348],[1213,341,1367,296],
        [560,504,685,530],[803,606,943,580],[1231,505,1369,533],
        [633,15,637,68],[670,70,670,133],[906,197,908,275],[1323,255,1326,297]
    ].forEach(([x1, y1, x2, y2]) => {
        add(g, 'line', { x1: x1, y1: y1, x2: x2, y2: y2, stroke: '#f00', 'stroke-width': 3, 'stroke-linecap': 'round' });
    });
    [[638,79],[669,144],[908,285],[1327,307]].forEach(([x, y]) => {
        add(g, 'path', { d: `M${x} ${y}l-4-14h8z`, fill: '#f00' });
    });
}

function drawNet() {
    const g = document.getElementById('net');
    for (let i = 0; i < 8; i++) {
        const h = 3 + i;
        rect(g, i * 3, 0, 2, 12 - h, '#6b8000');
        rect(g, i * 3, 13 - h, 2, h, '#0b3a5c');
    }
}

drawPrice();
drawCci();
drawRsi();
drawHistograms();
drawScales();
drawTimeAxis();
drawMarkup();
drawNet();
```
